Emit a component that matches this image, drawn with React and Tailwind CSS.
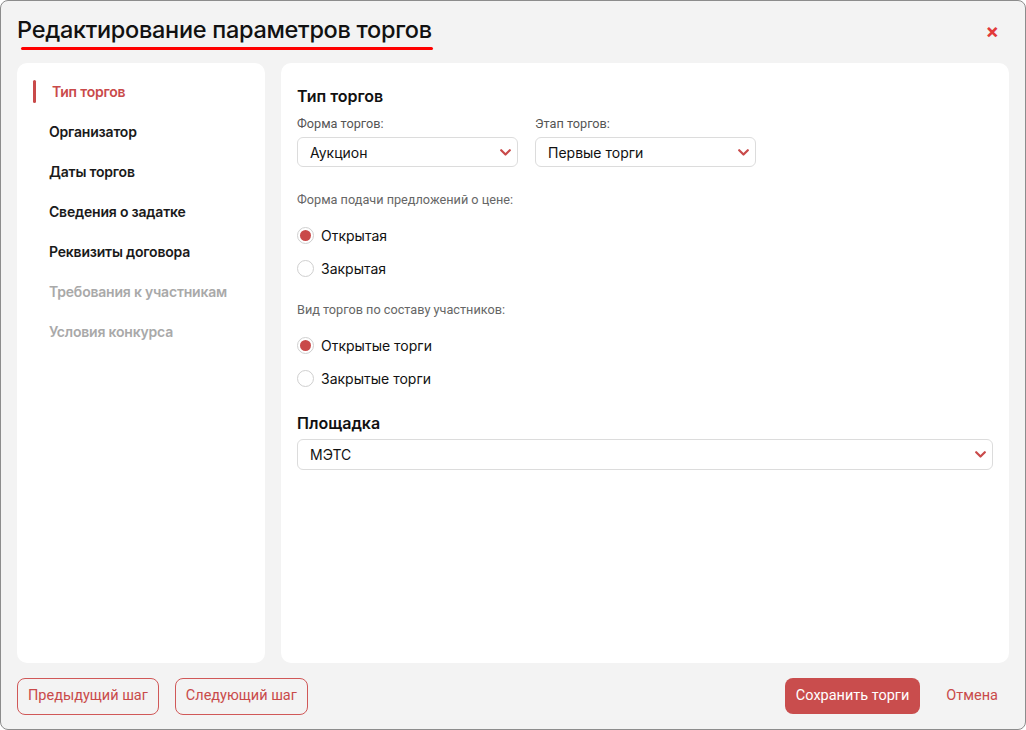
import React from "react";

function Chevron() {
  return (
    <svg width="11" height="7" viewBox="0 0 11 7" fill="none">
      <path d="M1.2 1.2 L5.5 5.5 L9.8 1.2" stroke="#c94a4a" strokeWidth="2.2" strokeLinecap="round" strokeLinejoin="round" />
    </svg>
  );
}

function Select({ value, className }) {
  return (
    <div className={`flex items-center justify-between h-[30px] border border-[#dcdcdc] rounded-md bg-white pl-[12px] pr-[6px] ${className}`}>
      <span className="text-[14px] text-[#111]">{value}</span>
      <Chevron />
    </div>
  );
}

function Radio({ checked, label }) {
  return (
    <div className="flex items-center gap-[7px] h-[20px]">
      <div className="w-[17px] h-[17px] rounded-full border border-[#cfcfcf] bg-white flex items-center justify-center">
        {checked && <div className="w-[11px] h-[11px] rounded-full bg-[#c94a4a]" />}
      </div>
      <span className="text-[14px] text-[#111]">{label}</span>
    </div>
  );
}

export default function App() {
  const nav = [
    ["Организатор", true],
    ["Даты торгов", true],
    ["Сведения о задатке", true],
    ["Реквизиты договора", true],
    ["Требования к участникам", false],
    ["Условия конкурса", false],
  ];
  return (
    <div className="w-[1026px] h-[730px] bg-[#f3f3f3] border border-[#8c8c8c] rounded-[8px] flex flex-col overflow-hidden" style={{ fontFamily: "Inter, 'Noto Sans', sans-serif" }}>
      <div className="flex items-start justify-between pl-[16px] pr-[26px] pt-[13px] h-[62px]">
        <div className="flex flex-col">
          <h1 className="text-[23.5px] font-medium text-[#111] leading-[32px] tracking-[-0.3px]">Редактирование параметров торгов</h1>
          <div className="h-[3px] bg-[#ff0000] rounded-full ml-[4px] mt-[1px] w-[412px]" />
        </div>
        <span className="text-[#e23a3a] text-[20px] font-bold mt-[3px] leading-[28px]">×</span>
      </div>
      <div className="flex gap-[16px] px-[16px] flex-1 min-h-0">
        <div className="w-[248px] bg-white rounded-[10px] pt-[17px] flex flex-col">
          <div className="flex items-center h-[23px] pl-[16px]">
            <div className="w-[3px] h-[23px] bg-[#c94a4a] rounded-sm" />
            <span className="ml-[16px] text-[14px] font-semibold text-[#c94a4a] tracking-[-0.2px]">Тип торгов</span>
          </div>
          {nav.map(([t, a]) => (
            <div key={t} className={`pl-[32px] mt-[17px] h-[23px] flex items-center text-[14px] font-semibold tracking-[-0.2px] ${a ? "text-[#1a1a1a]" : "text-[#a9a9a9]"}`}>
              {t}
            </div>
          ))}
        </div>
        <div className="flex-1 bg-white rounded-[10px] px-[16px] pt-[22px] flex flex-col">
          <h2 className="text-[16px] font-semibold text-[#111] leading-[22px]">Тип торгов</h2>
          <div className="flex gap-[17px] mt-[8px]">
            <div className="flex flex-col">
              <span className="text-[12.7px] text-[#555] leading-[18px]" style={{ fontFamily: "Roboto, sans-serif" }}>Форма торгов:</span>
              <Select value="Аукцион" className="w-[221px] mt-[4px]" />
            </div>
            <div className="flex flex-col">
              <span className="text-[12.7px] text-[#555] leading-[18px]" style={{ fontFamily: "Roboto, sans-serif" }}>Этап торгов:</span>
              <Select value="Первые торги" className="w-[221px] mt-[4px]" />
            </div>
          </div>
          <span className="text-[12.7px] text-[#666] leading-[18px] mt-[24px]" style={{ fontFamily: "Roboto, sans-serif" }}>Форма подачи предложений о цене:</span>
          <div className="flex flex-col gap-[13px] mt-[16px]">
            <Radio checked label="Открытая" />
            <Radio label="Закрытая" />
          </div>
          <span className="text-[12.7px] text-[#666] leading-[18px] mt-[23px]" style={{ fontFamily: "Roboto, sans-serif" }}>Вид торгов по составу участников:</span>
          <div className="flex flex-col gap-[13px] mt-[16px]">
            <Radio checked label="Открытые торги" />
            <Radio label="Закрытые торги" />
          </div>
          <h2 className="text-[16px] font-semibold text-[#111] leading-[22px] mt-[24px]">Площадка</h2>
          <Select value="МЭТС" className="w-full mt-[5px] h-[31px]" />
        </div>
      </div>
      <div className="flex items-center justify-between pl-[16px] pr-[27px] h-[66px]" style={{ fontFamily: "Roboto, sans-serif" }}>
        <div className="flex gap-[16px]">
          <button className="h-[37px] px-[10px] border border-[#d05858] rounded-lg text-[14.5px] text-[#c94a4a] bg-transparent">Предыдущий шаг</button>
          <button className="h-[37px] px-[10px] border border-[#d05858] rounded-lg text-[14.5px] text-[#c94a4a] bg-transparent">Следующий шаг</button>
        </div>
        <div className="flex items-center gap-[26px]">
          <button className="h-[36px] px-[11px] rounded-lg bg-[#c94d4d] text-white text-[14.5px]">Сохранить торги</button>
          <button className="text-[14.5px] text-[#c94a4a]">Отмена</button>
        </div>
      </div>
    </div>
  );
}
